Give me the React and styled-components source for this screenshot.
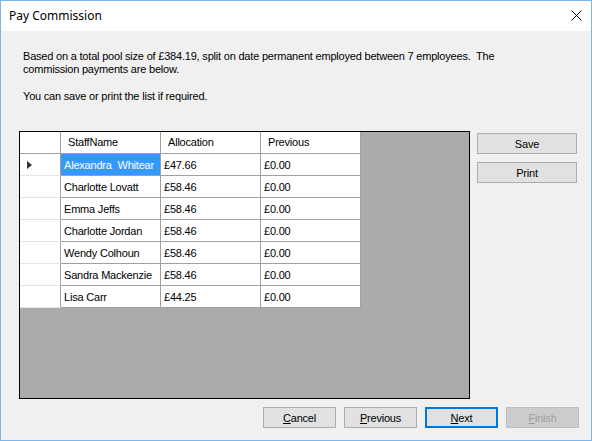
import React from 'react';
import styled, { createGlobalStyle } from 'styled-components';

const GlobalStyle = createGlobalStyle`
  html, body {
    margin: 0;
    padding: 0;
    background: #f0f0f0;
  }
  body {
    font-family: "Liberation Sans", Arial, sans-serif;
    font-size: 11px;
    letter-spacing: -0.2px;
    color: #000;
  }
`;

const rows = [
  { name: 'Alexandra  Whitear', allocation: '£47.66', previous: '£0.00' },
  { name: 'Charlotte Lovatt', allocation: '£58.46', previous: '£0.00' },
  { name: 'Emma Jeffs', allocation: '£58.46', previous: '£0.00' },
  { name: 'Charlotte Jordan', allocation: '£58.46', previous: '£0.00' },
  { name: 'Wendy Colhoun', allocation: '£58.46', previous: '£0.00' },
  { name: 'Sandra Mackenzie', allocation: '£58.46', previous: '£0.00' },
  { name: 'Lisa Carr', allocation: '£44.25', previous: '£0.00' },
];

function App() {
  return (
    <>
      <GlobalStyle />
      <Window>
        <TitleBar>
          <span>Pay Commission</span>
          <svg width="11" height="11" viewBox="0 0 11 11">
            <path d="M0.5 0.5 L10.5 10.5 M10.5 0.5 L0.5 10.5" stroke="#000" strokeWidth="1" />
          </svg>
        </TitleBar>

        <Content>
          <Intro>
            <p>
              Based on a total pool size of £384.19, split on date permanent employed between 7 employees.&nbsp; The
              <br />
              commission payments are below.
            </p>
            <p>You can save or print the list if required.</p>
          </Intro>

          <Main>
            <GridView>
              <Table>
                <Row>
                  <RowHead $head />
                  <HeadCell>StaffName</HeadCell>
                  <HeadCell>Allocation</HeadCell>
                  <HeadCell>Previous</HeadCell>
                </Row>
                {rows.map((r, i) => (
                  <Row key={i}>
                    <RowHead>{i === 0 && <Arrow />}</RowHead>
                    <Cell $selected={i === 0}>{r.name}</Cell>
                    <Cell>{r.allocation}</Cell>
                    <Cell>{r.previous}</Cell>
                  </Row>
                ))}
              </Table>
            </GridView>

            <Side>
              <Button $wide>Save</Button>
              <Button $wide>Print</Button>
            </Side>
          </Main>

          <Footer>
            <Button><u>C</u>ancel</Button>
            <Button><u>P</u>revious</Button>
            <Button $default><u>N</u>ext</Button>
            <Button $disabled><u>F</u>inish</Button>
          </Footer>
        </Content>
      </Window>
    </>
  );
}

const Window = styled.div`
  width: 592px;
  height: 441px;
  box-sizing: border-box;
  border: 1px solid #7fb4e8;
  display: flex;
  flex-direction: column;
  background: #f0f0f0;
`;

const TitleBar = styled.div`
  height: 30px;
  flex: none;
  background: #fff;
  display: flex;
  align-items: center;
  justify-content: space-between;
  padding: 0 9px 1px 8px;
  box-sizing: border-box;
  font-family: "Noto Sans", "Open Sans", sans-serif;
  font-size: 12px;
  letter-spacing: 0;
  color: #000;
  svg { display: block; }
`;

const Content = styled.div`
  flex: 1;
  display: flex;
  flex-direction: column;
  padding: 19px 12px 0 18px;
`;

const Intro = styled.div`
  padding-left: 4px;
  line-height: 13px;
  p { margin: 0; }
  p + p { margin-top: 14px; }
`;

const Main = styled.div`
  display: flex;
  gap: 7px;
  margin-top: 28px;
`;

const GridView = styled.div`
  width: 451px;
  height: 268px;
  box-sizing: border-box;
  border: 1px solid #000;
  background: #ababab;
`;

const Table = styled.div`
  width: 341px;
  background: #fff;
`;

const Row = styled.div`
  display: flex;
  height: 22px;
`;

const BaseCell = styled.div`
  box-sizing: border-box;
  height: 22px;
  width: 100px;
  border-right: 1px solid #a0a0a0;
  border-bottom: 1px solid #a0a0a0;
  display: flex;
  align-items: center;
  white-space: pre;
  overflow: hidden;
`;

const RowHead = styled(BaseCell)`
  width: 41px;
  padding-left: 7px;
  border-bottom-color: ${p => (p.$head ? '#a0a0a0' : '#e3e3e3')};
`;

const HeadCell = styled(BaseCell)`
  padding-left: 7px;
  padding-bottom: 1px;
`;

const Cell = styled(BaseCell)`
  padding-left: 3px;
  background: ${p => (p.$selected ? '#3399ff' : '#fff')};
  color: ${p => (p.$selected ? '#fff' : '#000')};
`;

const Arrow = styled.span`
  width: 0;
  height: 0;
  border-top: 4.5px solid transparent;
  border-bottom: 4.5px solid transparent;
  border-left: 5px solid #333;
`;

const Side = styled.div`
  display: flex;
  flex-direction: column;
  gap: 8px;
  padding-top: 2px;
`;

const Footer = styled.div`
  display: flex;
  justify-content: flex-end;
  gap: 8px;
  margin-top: 8px;
`;

const Button = styled.div`
  box-sizing: border-box;
  width: ${p => (p.$wide ? '100px' : '73px')};
  height: 21px;
  display: flex;
  align-items: center;
  justify-content: center;
  background: ${p => (p.$disabled ? '#cccccc' : '#e1e1e1')};
  border: ${p => (p.$default ? '2px solid #0078d7' : p.$disabled ? '1px solid #bfbfbf' : '1px solid #adadad')};
  color: ${p => (p.$disabled ? '#a0a0a0' : '#000')};
  font-size: 11px;
  u { text-decoration: underline; }
`;

export default App;
